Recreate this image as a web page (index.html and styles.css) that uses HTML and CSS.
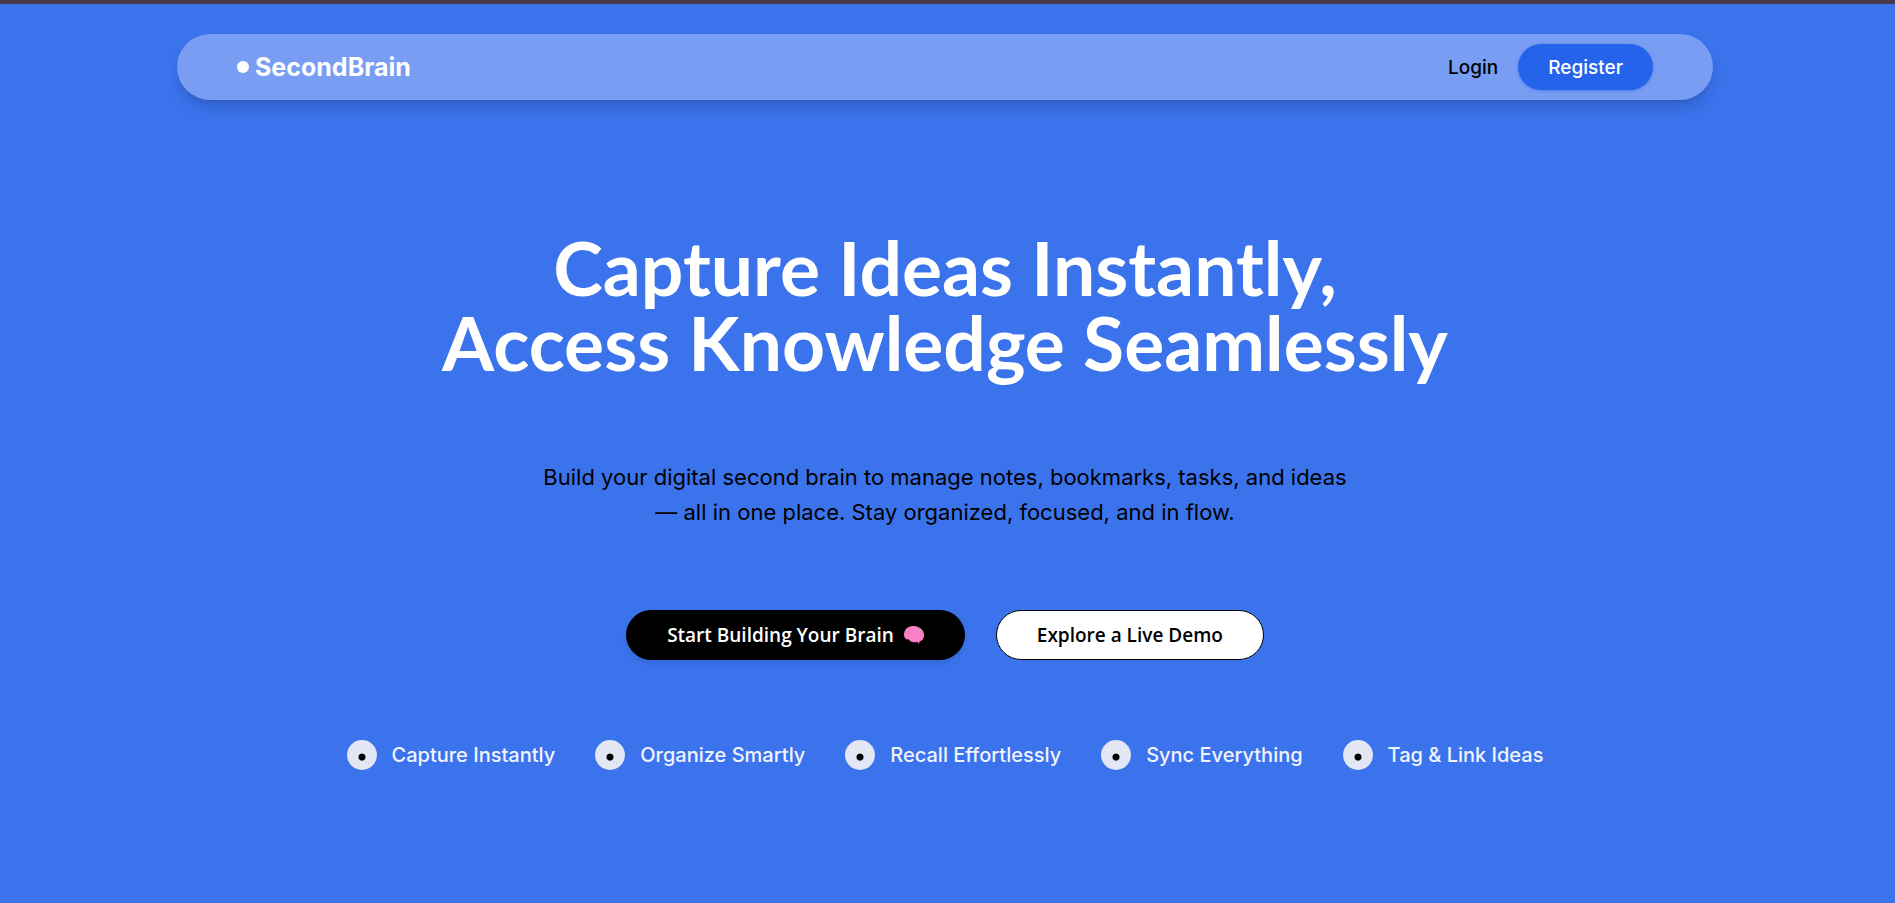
FILE: index.html
```
<!DOCTYPE html>
<html lang="en">
<head>
<meta charset="utf-8">
<meta name="viewport" content="width=device-width, initial-scale=1.0">
<title>SecondBrain</title>
<link rel="stylesheet" href="styles.css">
</head>
<body>
<header>
  <nav class="navbar">
    <a class="logo" href="#"><span class="logo-dot"></span>SecondBrain</a>
    <div class="nav-links">
      <a class="login" href="#">Login</a>
      <button class="register" type="button">Register</button>
    </div>
  </nav>
</header>

<main class="hero">
  <h1>Capture Ideas Instantly,<br>Access Knowledge Seamlessly</h1>
  <p class="intro">Build your digital second brain to manage notes, bookmarks, tasks, and ideas<br>— all in one place. Stay organized, focused, and in flow.</p>

  <div class="actions">
    <button class="btn btn-dark" type="button">Start Building Your Brain
      <svg class="brain" viewBox="0 0 20 18" aria-hidden="true">
        <path fill="#fa7fc6" d="M0 9C0 5 2 2 5 1c3-1.500 7-1.300 10 .5 3 1.200 5 4 5 7.500 0 3.500-2 6-4.500 6.500L15 18l-1.500-2C9 16.800 6 16 5 13.500 2 14 0 12 0 9z"/>
        <path fill="#a8a0ac" d="M2 5h1v1H2zM14 4h1v1h-1zM16 5h1v1h-1zM16 9h1v1h-1z"/>
      </svg>
    </button>
    <button class="btn btn-light" type="button">Explore a Live Demo</button>
  </div>

  <ul class="features">
    <li><span class="bullet"></span>Capture Instantly</li>
    <li><span class="bullet"></span>Organize Smartly</li>
    <li><span class="bullet"></span>Recall Effortlessly</li>
    <li><span class="bullet"></span>Sync Everything</li>
    <li><span class="bullet"></span>Tag &amp; Link Ideas</li>
  </ul>
</main>
</body>
</html>
```
FILE: styles.css
```
* {
  box-sizing: border-box;
}
body {
  margin: 0;
  min-height: 100vh;
  padding: 30px 5px 0 0;
  border-top: 4px solid #46394a;
  background-color: #3b73ed;
  color: #000;
  font-family: Inter, "Liberation Sans", sans-serif;
}
header {
  padding: 0 20px;
}
.navbar {
  display: flex;
  align-items: center;
  justify-content: space-between;
  max-width: 1536px;
  margin: 0 auto;
  padding: 10px 60px;
  border-radius: 33px;
  background-color: #789df3;
  box-shadow: 0 10px 15px -3px rgba(0, 0, 0, 0.15), 0 4px 6px -4px rgba(0, 0, 0, 0.15);
}
.logo {
  display: flex;
  align-items: center;
  gap: 6px;
  color: white;
  font-size: 25px;
  font-weight: 700;
  line-height: 30px;
  text-decoration: none;
}
.logo-dot {
  width: 12px;
  height: 12px;
  border-radius: 50%;
  background-color: white;
}
.nav-links {
  display: flex;
  align-items: center;
  gap: 20px;
  font-size: 19px;
  font-weight: 500;
}
.login {
  color: #000;
  text-decoration: none;
}
.register {
  height: 46px;
  padding: 0 30px;
  border: 0;
  border-radius: 23px;
  background-color: #2563eb;
  box-shadow: 0 1px 3px rgba(37, 99, 235, 0.5);
  color: white;
  font: inherit;
}

/* hero */
.hero {
  display: flex;
  flex-direction: column;
  align-items: center;
  padding: 130px 20px 80px;
  text-align: center;
}
h1 {
  margin: 0;
  color: white;
  font-family: Lato, Inter, sans-serif;
  font-size: 75px;
  font-weight: 700;
  line-height: 75px;
}
.intro {
  margin: 80px 0 0;
  font-size: 22px;
  line-height: 35px;
}
.actions {
  display: flex;
  flex-wrap: wrap;
  justify-content: center;
  gap: 31px;
  margin-top: 80px;
}
.btn {
  display: flex;
  align-items: center;
  gap: 10px;
  height: 50px;
  padding: 0 40px;
  border: 1px solid #000;
  border-radius: 25px;
  font-family: "Open Sans", "Noto Sans", sans-serif;
  font-size: 19px;
  font-weight: 600;
}
.btn-dark {
  background-color: #000;
  box-shadow: 0 4px 6px -1px rgba(0, 0, 0, 0.1);
  color: white;
}
.btn-light {
  background-color: white;
  color: #000;
}
.brain {
  width: 20px;
  height: 18px;
}
.features {
  display: flex;
  flex-wrap: wrap;
  justify-content: center;
  gap: 20px 40px;
  margin: 80px 0 0;
  padding: 0;
  list-style: none;
  color: #f1f4fd;
  font-size: 20px;
  font-weight: 500;
}
.features li {
  display: flex;
  align-items: center;
  gap: 15px;
}
.bullet {
  width: 30px;
  height: 30px;
  border-radius: 50%;
  background: radial-gradient(circle at 50% 57%, #000 3px, #e2e7f3 4px);
}
```
